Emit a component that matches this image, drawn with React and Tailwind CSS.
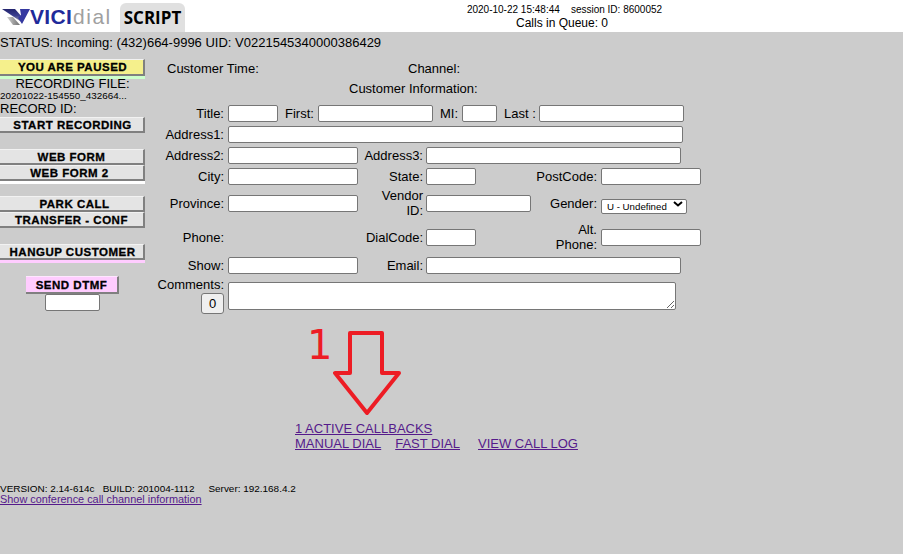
import React from "react";

const Input = ({ className = "" }) => (
  <input
    type="text"
    className={`h-[17px] shrink-0 rounded-[2px] border border-[#767676] bg-white ${className}`}
  />
);

const SideButton = ({ children, className = "bg-[#e4e4e4]", pad = "" }) => (
  <div
    className={`flex h-4 w-[145px] items-center justify-center border-t border-r-2 border-b-2 border-t-[#f2f2f2] border-r-[#808080] border-b-[#808080] pt-[2px] font-bold text-[11.5px] tracking-[0.5px] text-black [-webkit-text-stroke:0.3px_black] font-['Liberation_Sans',Arial,sans-serif] ${className} ${pad}`}
  >
    {children}
  </div>
);

const Label = ({ children, className = "w-[224px]" }) => (
  <span className={`shrink-0 text-right leading-[15px] ${className}`}>{children}</span>
);

const Row = ({ className = "h-[21px]", children }) => (
  <div className={`-ml-[145px] flex items-center ${className}`}>{children}</div>
);

const Logo = () => (
  <div className="flex h-8 w-[120px] items-center pl-[2px]">
    <svg width="29" height="16" viewBox="0 0 29 16" className="mt-[1px] shrink-0">
      <defs>
        <linearGradient id="wing" x1="0" y1="0" x2="0" y2="1">
          <stop offset="0" stopColor="#23246e" />
          <stop offset="0.55" stopColor="#3b3f8f" />
          <stop offset="1" stopColor="#9a9aa8" />
        </linearGradient>
        <linearGradient id="base" x1="0" y1="0" x2="1" y2="0">
          <stop offset="0" stopColor="#d0d0d0" />
          <stop offset="1" stopColor="#6f6f6f" />
        </linearGradient>
      </defs>
      <path d="M5 8l6 0 7 8H11z" fill="url(#base)" />
      <path d="M0 0h13l7 8-2 4z" fill="url(#wing)" />
      <path d="M18 0h10l-8 15-4-6 3-3z" fill="#3438a0" />
    </svg>
    <span className="ml-[-1px] font-bold text-[21px] leading-none tracking-[0.3px] text-[#1f2a9a] font-['Liberation_Sans',Arial,sans-serif]">
      VICI
    </span>
    <span className="ml-[1px] text-[21px] leading-none tracking-[1.5px] text-[#a0a0a0] font-['Liberation_Sans',Arial,sans-serif]">
      dial
    </span>
  </div>
);

const App = () => {
  return (
    <div className="h-[554px] w-[903px] overflow-hidden bg-[#cccccc] text-[13px] text-black font-['Liberation_Sans',Arial,sans-serif]">
      <div className="flex h-8 bg-white">
        <Logo />
        <div className="mt-[3px] flex h-[29px] w-[65px] items-center justify-center rounded-t-[6px] bg-[#e0e0e0] font-bold text-[17px] font-['Open_Sans',sans-serif]">
          SCRIPT
        </div>
        <div className="ml-[279px] flex w-[196px] flex-col items-center pt-[3px]">
          <span className="ml-[5px] text-[10px] leading-[13px] whitespace-pre">2020-10-22 15:48:44    session ID: 8600052</span>
          <span className="text-[12px] leading-[14px]">Calls in Queue: 0</span>
        </div>
      </div>

      <div className="h-[27px] pt-[3px] leading-4">STATUS: Incoming: (432)664-9996 UID: V0221545340000386429</div>

      <div className="flex h-[255px]">
        <div className="flex w-[145px] shrink-0 flex-col">
          <SideButton className="h-[17px] bg-[#f5f08c]" pad="pl-[2px]">YOU ARE PAUSED</SideButton>
          <div className="h-[3px] bg-[#ccffcc]" />
          <div className="-mt-[2px] text-center leading-[13px]">RECORDING FILE:</div>
          <div className="whitespace-nowrap text-[9.9px] leading-[12px]">20201022-154550_432664...</div>
          <div className="leading-[13px]">RECORD ID:</div>
          <SideButton className="mt-[2px] bg-[#e4e4e4]" pad="pl-[2px]">START RECORDING</SideButton>
          <SideButton className="mt-4 bg-[#e4e4e4]">WEB FORM</SideButton>
          <SideButton pad="pr-[4px]">WEB FORM 2</SideButton>
          <div className="h-[3px] bg-white" />
          <SideButton className="mt-3 bg-[#e4e4e4]" pad="pl-[6px]">PARK CALL</SideButton>
          <SideButton>TRANSFER - CONF</SideButton>
          <SideButton className="mt-4 bg-[#e4e4e4]" pad="pl-[2px]">HANGUP CUSTOMER</SideButton>
          <div className="h-[3px] bg-[#ffccff]" />
          <div className="ml-[26px] mt-[13px] flex h-[18px] w-[93px] items-center justify-center border-t border-r-2 border-b-2 border-t-[#ffe6ff] border-r-[#808080] border-b-[#808080] bg-[#ffccff] pt-[2px] font-bold text-[11.5px] tracking-[0.5px] [-webkit-text-stroke:0.3px_black]">
            SEND DTMF
          </div>
          <Input className="ml-[45px] w-[55px]" />
        </div>

        <div className="flex grow flex-col">
          <div className="flex h-5 items-center">
            <span className="ml-[22px] w-[241px]">Customer Time:</span>
            <span>Channel:</span>
          </div>
          <div className="flex h-5 items-center pl-[204px]">Customer Information:</div>

          <Row className="mt-[4px] h-[21px]">
            <Label>Title:</Label>
            <Input className="ml-1 w-[50px]" />
            <span className="ml-[7px] mr-[3px] w-[30px]">First:</span>
            <Input className="w-[115px]" />
            <span className="ml-[7px] mr-[3px] w-[19px]">MI:</span>
            <Input className="w-[35px]" />
            <span className="ml-[7px] mr-[3px] w-[32px]">Last :</span>
            <Input className="w-[145px]" />
          </Row>
          <Row>
            <Label>Address1:</Label>
            <Input className="ml-1 w-[455px]" />
          </Row>
          <Row>
            <Label>Address2:</Label>
            <Input className="ml-1 w-[130px]" />
            <Label className="w-[65px]">Address3:</Label>
            <Input className="ml-[3px] w-[255px]" />
          </Row>
          <Row>
            <Label>City:</Label>
            <Input className="ml-1 w-[130px]" />
            <Label className="w-[65px]">State:</Label>
            <Input className="ml-[3px] w-[50px]" />
            <Label className="w-[121px]">PostCode:</Label>
            <Input className="ml-1 w-[100px]" />
          </Row>
          <Row className="h-[32px]">
            <Label>Province:</Label>
            <Input className="ml-1 w-[130px]" />
            <Label className="w-[65px]">
              Vendor
              <br />
              ID:
            </Label>
            <Input className="ml-[3px] w-[105px]" />
            <Label className="w-[66px]">Gender:</Label>
            <div className="relative ml-1 h-[15px] w-[86px]">
              <select className="h-full w-full appearance-none rounded-[2px] border border-[#767676] bg-white pl-[5px] text-[9.7px] text-black">
                <option>U - Undefined</option>
              </select>
              <svg width="10" height="6" viewBox="0 0 10 6" className="pointer-events-none absolute right-[4px] top-[5px]">
                <path d="M1 1l4 3.5L9 1" fill="none" stroke="black" strokeWidth="2" />
              </svg>
            </div>
          </Row>
          <Row className="h-[36px]">
            <Label>Phone:</Label>
            <span className="ml-1 w-[130px]" />
            <Label className="w-[65px]">DialCode:</Label>
            <Input className="ml-[3px] w-[50px]" />
            <Label className="w-[121px]">
              Alt.
              <br />
              Phone:
            </Label>
            <Input className="ml-1 w-[100px]" />
          </Row>
          <Row className="h-[20px]">
            <Label>Show:</Label>
            <Input className="ml-1 w-[130px]" />
            <Label className="w-[65px]">Email:</Label>
            <Input className="ml-[3px] w-[255px]" />
          </Row>
          <div className="mt-[2px] -ml-[145px] flex">
            <div className="flex w-[224px] shrink-0 flex-col items-end">
              <span className="leading-4">Comments:</span>
              <div className="flex h-[21px] w-[23px] items-center justify-center rounded-[3px] border border-[#767676] bg-[#efefef] text-[13px]">
                0
              </div>
            </div>
            <textarea className="ml-1 mt-[5px] h-[28px] w-[448px] rounded-[2px] border border-[#767676] bg-white" />
          </div>
        </div>
      </div>

      <div className="flex h-[107px] items-start pl-[307px] pt-[10px]">
        <span className="w-[26px] text-[40px] leading-[42px] text-[#ed1c24] font-['DejaVu_Sans',sans-serif]">1</span>
        <svg width="70" height="86" viewBox="0 0 70 86" className="mt-[7px]">
          <path
            d="M17 2H49V42H66L34 82L2 42H17Z"
            fill="none"
            stroke="#ed1c24"
            strokeWidth="4"
            strokeLinejoin="round"
          />
        </svg>
      </div>

      <div className="flex flex-col pl-[295px] leading-[15px] text-[#551a8b]">
        <a className="underline">1 ACTIVE CALLBACKS</a>
        <div className="flex">
          <a className="underline">MANUAL DIAL</a>
          <a className="ml-[14px] underline">FAST DIAL</a>
          <a className="ml-[18px] underline">VIEW CALL LOG</a>
        </div>
      </div>

      <div className="mt-[31px] whitespace-pre text-[9.95px] leading-[13px]">VERSION: 2.14-614c   BUILD: 201004-1112     Server: 192.168.4.2</div>
      <a className="-mt-px block text-[10.9px] leading-[11px] text-[#551a8b] underline">Show conference call channel information</a>
    </div>
  );
};

export default App;
